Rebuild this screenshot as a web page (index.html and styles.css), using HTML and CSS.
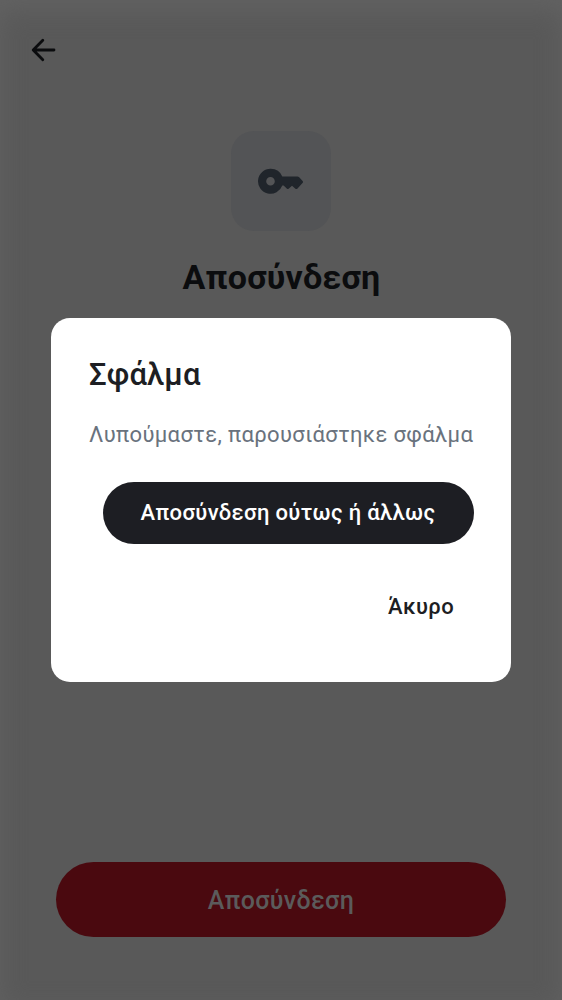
FILE: index.html
```html
<!DOCTYPE html>
<html lang="el">
<head>
<meta charset="utf-8">
<title>Αποσύνδεση</title>
<link rel="stylesheet" href="styles.css">
</head>
<body>
<main class="screen">
  <header class="topbar">
    <svg class="back" viewBox="0 0 24 24" aria-hidden="true"><path d="M22.5 12H2.2M11.3 2.3L1.7 12L11.3 21.7"/></svg>
  </header>
  <div class="tile">
    <svg class="key" viewBox="0 -.3 46 26" aria-hidden="true"><path fill-rule="evenodd" d="M12.5 .5a12.5 12.5 0 1 0 11.8 16.7h1.3l3.4 3.2q.8.7 1.6 0l3.4-3 3.4 3q1 .8 1.9 0l5.2-5.6q1-1.1.1-2.2l-3.4-3.6q-.8-.7-1.8-.7H24.3A12.5 12.5 0 0 0 12.5 .5zM12.5 8.7a4.3 4.3 0 1 1 0 8.6a4.3 4.3 0 0 1 0-8.6z"/></svg>
  </div>
  <h1 class="heading">Αποσύνδεση</h1>
  <button class="logout">Αποσύνδεση</button>
</main>
<div class="overlay">
  <section class="dialog" role="dialog">
    <h2 class="title">Σφάλμα</h2>
    <p class="message">Λυπούμαστε, παρουσιάστηκε σφάλμα</p>
    <button class="confirm">Αποσύνδεση ούτως ή άλλως</button>
    <button class="cancel">Άκυρο</button>
  </section>
</div>
</body>
</html>
```
FILE: styles.css
```css
* { box-sizing: border-box; }
body {
  margin: 0;
  font-family: Roboto, "Noto Sans", sans-serif;
}
h1, h2, p { margin: 0; font-weight: 400; white-space: nowrap; }
button {
  border: 0;
  padding: 0;
  font-family: inherit;
  white-space: nowrap;
}
.screen {
  display: flex;
  flex-direction: column;
  align-items: center;
  height: 1000px;
  padding-bottom: 62.6px;
  background: #595959;
  box-shadow: inset 0 10px 24px #626262;
}
.topbar {
  width: 100%;
  height: 131px;
  padding: 38px 0 0 31px;
}
.back {
  display: block;
  width: 25px;
  height: 24px;
  fill: none;
  stroke: #0b0c0e;
  stroke-width: 2.8;
  stroke-linecap: round;
  stroke-linejoin: round;
}
.tile {
  display: flex;
  align-items: center;
  justify-content: center;
  width: 100px;
  height: 100px;
  border-radius: 23px;
  background: #535456;
}
.key { width: 46px; height: 26px; fill: #20252b; }
.heading {
  margin-top: 24px;
  padding-left: 1px;
  font-size: 34px;
  line-height: 44px;
  font-weight: 700;
  letter-spacing: .2px;
  color: #0b0c0e;
}
.logout {
  width: 450px;
  height: 75px;
  margin-top: auto;
  padding-top: 1px;
  border-radius: 38px;
  background: #4a090f;
  color: #5b5b5b;
  font-size: 25px;
  font-weight: 500;
  letter-spacing: .35px;
}
.overlay {
  position: absolute;
  inset: 0;
  display: flex;
  align-items: center;
  justify-content: center;
}
.dialog {
  display: flex;
  flex-direction: column;
  align-items: flex-end;
  width: 460px;
  height: 364px;
  padding: 37px 37px 0 38px;
  border-radius: 19px;
  background: #fff;
}
.title {
  align-self: flex-start;
  font-size: 31px;
  line-height: 40px;
  font-weight: 500;
  letter-spacing: .15px;
  color: #1d1e23;
}
.message {
  align-self: flex-start;
  margin-top: 24px;
  font-size: 22px;
  line-height: 32px;
  letter-spacing: .36px;
  color: #69727d;
}
.confirm {
  width: 371px;
  height: 62px;
  margin-top: 31px;
  padding: 0 1px 1px 0;
  border-radius: 31px;
  background: #1d1e23;
  color: #fff;
  font-size: 22px;
  font-weight: 500;
  letter-spacing: .35px;
}
.cancel {
  height: 62px;
  margin-top: 31px;
  padding: 0 20px;
  background: none;
  color: #1d1e23;
  font-size: 22px;
  font-weight: 500;
  letter-spacing: .35px;
}
```
